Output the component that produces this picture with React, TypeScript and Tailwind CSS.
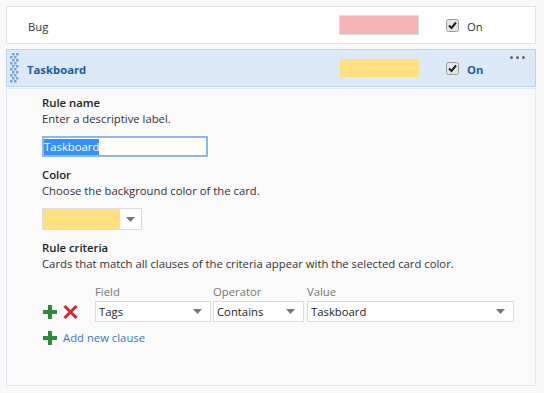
import React from "react";

const Check = () => (
  <svg width="13" height="13" viewBox="0 0 13 13">
    <rect x="0.5" y="0.5" width="12" height="12" rx="2" fill="#e6e6e6" stroke="#9a9a9a" />
    <path d="M3 6.5 L5.5 9 L10 3.5" fill="none" stroke="#222" strokeWidth="2" />
  </svg>
);

const Arrow = () => (
  <svg width="9" height="5" viewBox="0 0 9 5">
    <path d="M0 0 H9 L4.5 5 Z" fill="#777" />
  </svg>
);

const Plus = () => (
  <svg width="14" height="14" viewBox="0 0 14 14">
    <path d="M5 0 H9 V5 H14 V9 H9 V14 H5 V9 H0 V5 H5 Z" fill="#2e8b3b" />
  </svg>
);

const Cross = () => (
  <svg width="15" height="14" viewBox="0 0 15 14">
    <path d="M1.5 1 L13.5 13 M13.5 1 L1.5 13" stroke="#c9302c" strokeWidth="3" />
  </svg>
);

const Grip = () => (
  <svg width="10" height="32" viewBox="0 0 10 32">
    {Array.from({ length: 10 }).map((_, i) => (
      <g key={i} fill="#7ba7d4">
        <rect x={i % 2 ? 0 : 2} y={i * 3} width="2.5" height="2.5" />
        <rect x={i % 2 ? 4 : 6} y={i * 3} width="2.5" height="2.5" />
      </g>
    ))}
  </svg>
);

const Select = ({ label, w }: { label: string; w: string }) => (
  <div className={`flex h-[21px] items-center justify-between border border-[#dcdcdc] bg-white pl-[3px] pr-[8px] ${w}`}>
    <span className="text-[#222]">{label}</span>
    <Arrow />
  </div>
);

const App = () => {
  return (
    <div
      className="min-h-[393px] w-[544px] bg-[#f9f9f9] pt-[6px] pl-[6px] text-[11.3px] leading-[16px] text-[#222]"
      style={{ fontFamily: '"Open Sans", "Noto Sans", sans-serif' }}
    >
      <div className="flex h-[38px] w-[530px] items-center border border-[#e2e2e2] bg-white">
        <div className="w-[332px] pl-[21px] pt-[3px] text-[#333]">Bug</div>
        <div className="h-[20px] w-[80px] border border-[#dddddd] bg-[#f5b4b4]" />
        <div className="ml-[27px] flex items-center gap-[8px]">
          <Check />
          <span className="pt-[3px] text-[#333]">On</span>
        </div>
      </div>

      <div className="relative mt-[5px] flex h-[38px] w-[530px] items-center border border-[#b8d4f2] bg-[#dbe9f9]">
        <div className="pl-[3px] pt-[1px]">
          <Grip />
        </div>
        <div className="w-[320px] pl-[7px] pt-[3px] font-bold text-[#1c5e9d]">Taskboard</div>
        <div className="h-[18px] w-[79px] bg-[#ffdf80]" />
        <div className="ml-[27px] flex items-center gap-[8px]">
          <Check />
          <span className="pt-[3px] font-bold text-[#1c5e9d]">On</span>
        </div>
        <div className="absolute right-[10px] top-[6px] flex gap-[3px]">
          <span className="h-[3px] w-[3px] rounded-full bg-[#666]" />
          <span className="h-[3px] w-[3px] rounded-full bg-[#666]" />
          <span className="h-[3px] w-[3px] rounded-full bg-[#666]" />
        </div>
      </div>

      <div className="mt-[1px] h-[298px] w-[530px] border border-[#dde9f5] bg-[#fafafa] pl-[35px] pt-[6px]">
        <div className="font-semibold">Rule name</div>
        <div className="text-[#333]">Enter a descriptive label.</div>
        <div className="mt-[9px] flex h-[21px] w-[166px] items-center border-2 border-[#8fb5ee] bg-white">
          <span className="bg-[#3390ff] text-white">Taskboard</span>
        </div>

        <div className="mt-[10px] font-semibold">Color</div>
        <div className="text-[#333]">Choose the background color of the card.</div>
        <div className="mt-[9px] flex h-[22px] w-[100px] items-center border border-[#dcdcdc] bg-white">
          <div className="h-full w-[77px] bg-[#ffdf80]" />
          <div className="flex flex-1 justify-center">
            <Arrow />
          </div>
        </div>

        <div className="mt-[10px] font-semibold">Rule criteria</div>
        <div className="text-[#333]">Cards that match all clauses of the criteria appear with the selected card color.</div>

        <div className="mt-[12px] flex pl-[53px] text-[#777]">
          <div className="w-[118px]">Field</div>
          <div className="w-[94px]">Operator</div>
          <div>Value</div>
        </div>
        <div className="mt-[1px] flex items-center">
          <div className="flex w-[53px] items-center gap-[6px] pl-[1px]">
            <Plus />
            <Cross />
          </div>
          <div className="flex gap-[2px]">
            <Select label="Tags" w="w-[116px]" />
            <Select label="Contains" w="w-[91px]" />
            <div className="ml-[1px]">
              <Select label="Taskboard" w="w-[207px]" />
            </div>
          </div>
        </div>

        <div className="mt-[8px] flex items-center gap-[6px] pl-[1px]">
          <Plus />
          <span className="text-[#3a78c3]">Add new clause</span>
        </div>
      </div>
    </div>
  );
};

export default App;
